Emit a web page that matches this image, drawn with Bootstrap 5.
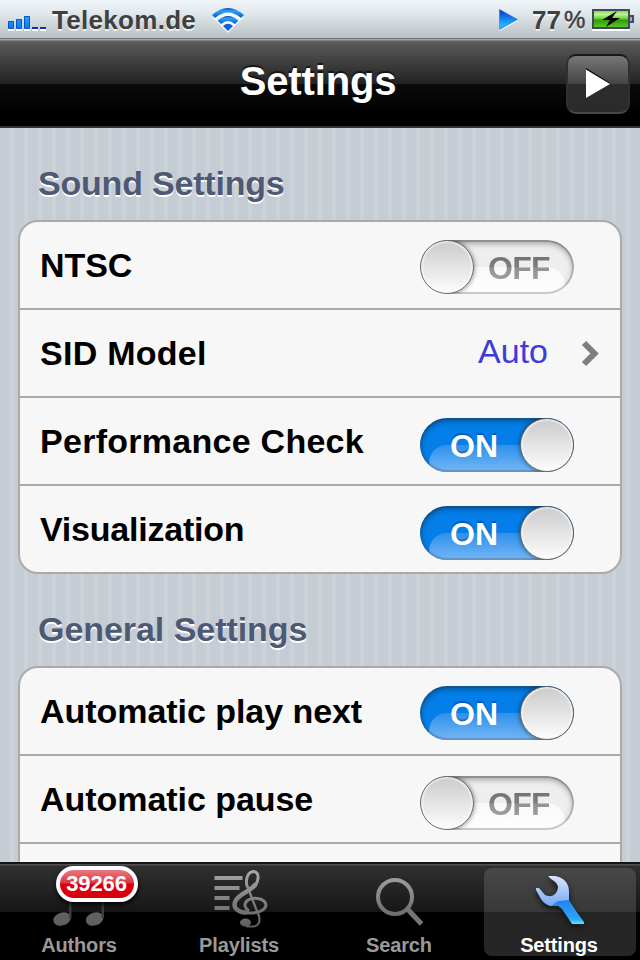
<!DOCTYPE html>
<html lang="en">
<head>
<meta charset="utf-8">
<meta name="viewport" content="width=device-width, initial-scale=1">
<title>Settings</title>
<link href="https://cdn.jsdelivr.net/npm/bootstrap@5.3.0/dist/css/bootstrap.min.css" rel="stylesheet">
<style>
body{width:640px;height:960px;font-family:"Liberation Sans",Arial,sans-serif;background:#000}
.status-strip{height:40px;background:linear-gradient(#eef4f7 0,#e3eaee 12px,#b9c1c5 38px,#69767b 38px,#69767b 39px,#a0a8ab 39px);color:#404040;font-size:26px;line-height:40px;text-shadow:0 2px 0 rgba(255,255,255,.7)}
.status-strip svg,.tab-item svg{display:block;flex:none}
.carrier{margin-left:6px;width:146px;letter-spacing:.3px}
.percent-num{width:31px;margin-left:13px}
.percent-sign{font-size:24px;width:22px;margin-left:1px;-webkit-text-stroke:.5px #404040}
.title-bar{height:88px;background:linear-gradient(#8b8b8b 0,#5a5a5a 2px,#222 44px,#0b0b0b 44px,#000 75px,#000 86px,#333 86px)}
.title-text{font-size:40px;line-height:82px;color:#fff;text-shadow:0 -2px 1px rgba(0,0,0,.6);margin:0 0 0 70px;letter-spacing:-.15px}
.play-btn{width:64px;height:60px;margin:14px 10px 0 0;padding:0;border:2px solid #303030;border-top-color:#191919;border-bottom-color:#484848;border-radius:10px;background:linear-gradient(#777,#444 28px,#2c2c2c 28px,#2b2b2b)}
.pinstripe{height:734px;overflow:hidden;padding:0 18px;background:repeating-linear-gradient(90deg,#c5ccd4 0 10px,#cbd2d8 10px 14px)}
.group-title{font-size:34px;line-height:34px;color:#4e5973;text-shadow:0 2px 0 #fff;padding:38px 0 20px 20px;margin:0;letter-spacing:-.05px}
.title-snug{letter-spacing:-.2px}
.settings-group{width:604px;border:2px solid #aaa;border-radius:20px;background:#f7f7f7;color:#000}
.settings-group .setting{height:86px;padding:0 0 0 20px;border:0;background:transparent;color:#000}
.settings-group .setting + .setting{height:88px;border-top:2px solid #aaa}
.setting-name{font-size:34px;line-height:86px;letter-spacing:-.05px}
.name-wide{letter-spacing:.27px}
.name-snug{letter-spacing:-.22px}
.choice{font-size:34px;line-height:82px;color:#403ad6;margin-right:33px}
.chevron{margin:30px 21px 0 0}
.toggle{width:154px;height:54px;border-radius:27px;overflow:hidden;margin:18px 46px 0 0;flex:none;position:relative;font-size:32px;line-height:56px}
.setting + .setting .toggle{margin-top:20px}
.toggle.is-off{background:#eee}
.toggle.is-on{background:#047fea;color:#fff}
.toggle::before{content:"";position:absolute;left:9px;right:9px;top:27px;bottom:0;border-radius:18px 18px 0 0;background:linear-gradient(#f8f8f8,#fff)}
.toggle.is-on::before{background:linear-gradient(#2f90ec,#74b7f5)}
.toggle::after{content:"";position:absolute;inset:0;border-radius:27px;box-shadow:inset 0 3px 6px rgba(0,0,0,.38),inset 0 0 0 2px rgba(80,80,80,.25)}
.toggle span{position:absolute;top:0;z-index:1}
.is-on span{left:30px;text-shadow:0 -2px 1px rgba(0,60,130,.5)}
.is-off span{left:68px;letter-spacing:-.7px;color:transparent;background:linear-gradient(#707070 15px,#7e7e7e 27px,#929292 28px,#9c9c9c 39px);-webkit-background-clip:text;background-clip:text}
.toggle i{position:absolute;z-index:2;top:0;width:54px;height:54px;border-radius:50%;border:1.5px solid #656565;background:linear-gradient(#cbcbcb,#fdfdfd);box-shadow:inset 0 0 2px 1px #fff,0 0 5px rgba(0,0,0,.55)}
.is-on i{right:0}.is-off i{left:0}
.tab-strip{height:98px;background:linear-gradient(#141414 0,#141414 2px,#505050 2px,#505050 3px,#303030 4px,#161616 50px,#000 50px);padding-top:6px}
.tab-item{width:152px;height:88px;margin:0 4px;border-radius:8px;color:#999;font-size:20px;font-weight:700;position:relative;letter-spacing:-.15px;text-decoration:none}
.tab-item.active{background:linear-gradient(#484848,#383838 44px,#262626 44px,#262626);color:#fff}
.tab-item svg{height:66px;width:152px}
.tab-item span.tab-name{line-height:22px;margin-left:-2px}
.count-pill{position:absolute;left:52px;top:-2px;width:82px;height:36px;border:4px solid #fff;border-radius:18px;background:linear-gradient(#e97980,#dc3540 13px,#d9000d 14px,#d9000d);color:#fff;font-size:22px;line-height:27px;letter-spacing:-.1px;text-indent:-1px;box-shadow:0 3px 4px rgba(0,0,0,.8)}
</style>
<script src="https://cdn.jsdelivr.net/npm/bootstrap@5.3.0/dist/js/bootstrap.bundle.min.js"></script>
</head>
<body class="overflow-hidden d-flex flex-column m-0">
<header class="status-strip d-flex fw-bold">
  <svg width="46" height="40"><defs><linearGradient id="sg" x2="0" y2="1"><stop stop-color="#22a7f8"/><stop offset="1" stop-color="#0878ec"/></linearGradient></defs>
    <path fill="#fff" d="M8 29h6v2H8zM16 29h6v2h-6zM24 29h6v2h-6zM32 29h6v2h-6zM40 29h6v2h-6z"/>
    <g fill="url(#sg)" stroke="#0753c8"><path d="M8.5 21.500h5v7h-5zM16.500 19.500h5v9h-5zM24.500 16.500h5v12h-5z"/></g><path fill="#0735c0" d="M32 27h6v2h-6zM40 27h6v2h-6z"/></svg>
  <span class="carrier">Telekom.de</span>
  <svg class="ms-2" width="48" height="40" viewBox="206 0 48 40"><defs><linearGradient id="wg" x2="0" y2="1"><stop stop-color="#0643bb"/><stop offset=".3" stop-color="#2da4f6"/><stop offset="1" stop-color="#0753d8"/></linearGradient></defs>
    <path fill="#fff" d="M212 17Q228 3 244 17L228 33z" opacity=".8"/>
    <path fill="url(#wg)" d="M212 15Q228 1 244 15L241 18Q228 7 215 18z"/><path fill="url(#wg)" d="M217.500 20.500Q228 11.500 238.500 20.500L235 24Q228 18 221 24z"/><path fill="#0961dc" d="M223 26Q228 21.500 233 26L228 31z"/></svg>
  <svg class="ms-auto" width="20" height="40"><defs><linearGradient id="pg" x2="0" y2="1"><stop stop-color="#0733cc"/><stop offset=".75" stop-color="#20b2ff"/></linearGradient></defs><path d="M0 11v20l19-10z" fill="#fff"/><path d="M.500 9.500v20l18-10z" fill="url(#pg)" stroke="#0a58dc" stroke-width=".5"/></svg>
  <span class="percent-num">77</span><span class="percent-sign fw-normal">%</span>
  <svg width="54" height="40" viewBox="586 0 54 40"><defs><linearGradient id="bg" x2="0" y2="1"><stop stop-color="#72d832"/><stop offset=".25" stop-color="#b9f590"/><stop offset=".5" stop-color="#63cc29"/><stop offset=".55" stop-color="#2b9c08"/><stop offset="1" stop-color="#5fd020"/></linearGradient></defs>
    <path fill="#fff" d="M592 29h38v2h-38z"/><rect x="593" y="10" width="36" height="18" fill="url(#bg)" stroke="#43475f" stroke-width="2"/><path d="M630 16h3v6h-3" fill="#aab" stroke="#43475f" stroke-width="2"/><path d="M617 11l-15 9h8l-4 7 14-9h-8z"/></svg>
</header>
<nav class="title-bar d-flex">
  <h1 class="title-text fw-bold flex-grow-1 text-center">Settings</h1>
  <button class="play-btn btn d-flex" aria-label="Play"><svg width="60" height="56"><path d="M18 12v4l22 13 2-2z" fill="#000"/><path d="M18 13.500v28.500l24-14z" fill="#fff"/></svg></button>
</nav>
<main class="pinstripe">
  <h2 class="group-title title-snug fw-bold">Sound Settings</h2>
  <div class="settings-group list-group">
    <div class="setting list-group-item d-flex justify-content-between"><span class="setting-name fw-bold">NTSC</span><div class="toggle is-off fw-bold" role="switch" aria-checked="false"><span>OFF</span><i></i></div></div>
    <div class="setting list-group-item d-flex"><span class="setting-name name-wide fw-bold me-auto">SID Model</span><span class="choice">Auto</span><svg class="chevron" width="18" height="28"><path d="M3 3l10.500 10.500L3 24" fill="none" stroke="#7f7f7f" stroke-width="6"/></svg></div>
    <div class="setting list-group-item d-flex justify-content-between"><span class="setting-name name-wide fw-bold">Performance Check</span><div class="toggle is-on fw-bold" role="switch" aria-checked="true"><span>ON</span><i></i></div></div>
    <div class="setting list-group-item d-flex justify-content-between"><span class="setting-name name-snug fw-bold">Visualization</span><div class="toggle is-on fw-bold" role="switch" aria-checked="true"><span>ON</span><i></i></div></div>
  </div>
  <h2 class="group-title fw-bold">General Settings</h2>
  <div class="settings-group list-group">
    <div class="setting list-group-item d-flex justify-content-between"><span class="setting-name fw-bold">Automatic play next</span><div class="toggle is-on fw-bold" role="switch" aria-checked="true"><span>ON</span><i></i></div></div>
    <div class="setting list-group-item d-flex justify-content-between"><span class="setting-name fw-bold">Automatic pause</span><div class="toggle is-off fw-bold" role="switch" aria-checked="false"><span>OFF</span><i></i></div></div>
    <div class="setting list-group-item"></div>
  </div>
</main>
<footer class="tab-strip d-flex">
  <a class="tab-item d-flex flex-column align-items-center">
    <svg viewBox="4 868 152 66"><g fill="#606060"><ellipse cx="62" cy="919" rx="9" ry="6.500" transform="rotate(-20 62 919)"/><ellipse cx="94.500" cy="919" rx="9" ry="6.500" transform="rotate(-20 94.500 919)"/><path fill="#3c3c3c" d="M69 890h2.500v28H69zM101.500 890h2.500v28h-2.500z"/></g></svg>
    <span class="tab-name">Authors</span><b class="count-pill text-center">39266</b></a>
  <a class="tab-item d-flex flex-column align-items-center">
    <svg viewBox="164 868 152 66"><defs><linearGradient id="cg" gradientUnits="userSpaceOnUse" x1="0" y1="870" x2="0" y2="928"><stop stop-color="#a8a8a8"/><stop offset="1" stop-color="#5c5c5c"/></linearGradient></defs>
      <g fill="url(#cg)"><path d="M214.500 876h28v4h-28zM214.500 886h25v4h-25zM214.500 896h15v4h-15zM214.500 906h15v4h-15z"/><ellipse cx="245.500" cy="922.500" rx="5.500" ry="4"/></g>
      <g fill="none" stroke="url(#cg)" stroke-linecap="round"><path stroke-width="3" d="M247 886C245 877 249 871.500 254 871.500C260 873 259 881 254 887"/><path stroke-width="4.500" d="M255 885C250 891 240 894 236 900C232 907 237 912 245 912.500"/><path stroke-width="3" d="M243 912.500C254 914 265 912 266 905C265 898 254 897 248 900C243 904 245 908 248 910"/><path stroke-width="2.200" d="M246.500 884L253 901L259 916Q261 925 254 926.500H247"/></g></svg>
    <span class="tab-name">Playlists</span></a>
  <a class="tab-item d-flex flex-column align-items-center">
    <svg viewBox="324 868 152 66"><g fill="none"><circle cx="395" cy="897" r="17" stroke="url(#cg)" stroke-width="4"/><path d="M407.500 909l14 15" stroke="#757575" stroke-width="5"/></g></svg>
    <span class="tab-name">Search</span></a>
  <a class="tab-item active d-flex flex-column align-items-center">
    <svg viewBox="484 868 152 66"><defs><linearGradient id="tg" x2="0" y2="1"><stop stop-color="#d8e5ff"/><stop offset="1" stop-color="#79a9f0"/></linearGradient><linearGradient id="hg" x2="0" y2="1"><stop stop-color="#2083ee"/><stop offset=".8" stop-color="#2da5fa"/><stop offset="1" stop-color="#62e5ff"/></linearGradient></defs>
      <g style="filter:drop-shadow(0 3px 3px #111)"><path fill="url(#tg)" d="M548 876H555Q562 877 566 882Q569 886 569 892V901L558 906H550Q544 904 541 899L536 890V888H539L545 895Q549 897 553 895.500Q558 892 558 887Q557 882 551 879z"/><path fill="url(#hg)" d="M551 906L558 901L569 900L576 911L584 922V924H572L562 909L558 906z"/></g></svg>
    <span class="tab-name">Settings</span></a>
</footer>
</body>
</html>
